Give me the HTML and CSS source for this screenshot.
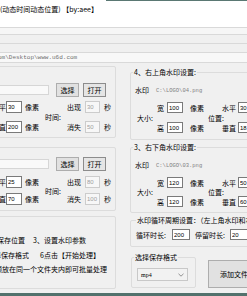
FILE: index.html
```html
<!DOCTYPE html>
<html lang="zh-CN">
<head>
    <meta charset="UTF-8">
    <meta name="viewport" content="width=device-width, initial-scale=1.0">
    <title>水印批量处理</title>
    <link rel="stylesheet" href="styles.css">
</head>
<body>
    <!-- Title -->
    <div class="title">
        <span class="caption">(动态时间动态位置) 【by:aee】</span>
        <span class="edge"></span>
    </div>

    <!-- Top fields -->
    <div class="strip s1"></div>
    <div class="strip s2"></div>
    <div class="strip s3"></div>
    <div class="pathbox">om\Desktop\www.u6d.com</div>

    <div class="main">
        <!-- Left column -->
        <div class="col-left">
            <div class="grp g1">
                <div class="filerow">
                    <div class="tb"></div>
                    <button>选择</button>
                    <button class="on">打开</button>
                </div>
                <div class="params">
                    <span>水平</span><input type="text" value="30"><span class="unit">像素</span>
                    <span class="time">时间:</span>
                    <span class="pre">出现</span><input type="text" class="off" value="30" disabled><span class="sec">秒</span>
                    <span>垂直</span><input type="text" value="200"><span class="unit">像素</span>
                    <span class="pre">消失</span><input type="text" class="off" value="50" disabled><span class="sec">秒</span>
                </div>
            </div>

            <div class="grp g2">
                <div class="filerow">
                    <div class="tb"></div>
                    <button>选择</button>
                    <button class="on">打开</button>
                </div>
                <div class="params">
                    <span>水平</span><input type="text" value="25"><span class="unit">像素</span>
                    <span class="time">时间:</span>
                    <span class="pre">出现</span><input type="text" class="off" value="80" disabled><span class="sec">秒</span>
                    <span>垂直</span><input type="text" value="70"><span class="unit">像素</span>
                    <span class="pre">消失</span><input type="text" class="off" value="100" disabled><span class="sec">秒</span>
                </div>
            </div>

            <div class="panel">
                <div class="line"><span class="cut w1"><span>2、选择保存位置</span></span><span class="step s-a">3、设置水印参数</span></div>
                <div class="line"><span class="cut w2"><span>5、选择保存格式</span></span><span class="step s-b">6点击【开始处理】</span></div>
                <div class="line"><span class="cut w3"><span>将需要处理的视频放在同一个文件夹内即可批量处理</span></span></div>
            </div>
        </div>

        <!-- Right column -->
        <div class="col-right">
            <fieldset class="box b4">
                <legend>4、右上角水印设置:</legend>
                <div class="wm"><span>水印</span><span class="path">C:\LOGO\04.png</span></div>
                <div class="sizes">
                    <span class="big">大小:</span>
                    <span>宽</span><input type="text" value="100"><span class="unit">像素</span>
                    <span class="big pos">位置:</span>
                    <span class="pre">水平</span><input type="text" value="30">
                    <span>高</span><input type="text" value="100"><span class="unit">像素</span>
                    <span class="pre">垂直</span><input type="text" value="18">
                </div>
            </fieldset>

            <fieldset class="box b3">
                <legend>3、右下角水印设置:</legend>
                <div class="wm"><span>水印</span><span class="path">C:\LOGO\03.png</span></div>
                <div class="sizes">
                    <span class="big">大小:</span>
                    <span>宽</span><input type="text" value="120"><span class="unit">像素</span>
                    <span class="big pos">位置:</span>
                    <span class="pre">水平</span><input type="text" value="50">
                    <span>高</span><input type="text" value="120"><span class="unit">像素</span>
                    <span class="pre">垂直</span><input type="text" value="60">
                </div>
            </fieldset>

            <fieldset class="box cyc">
                <legend>水印循环周期设置：（左上角水印和右下角水印）</legend>
                <div class="cycrow">
                    <span class="cl">循环时长:</span><input type="text" value="200">
                    <span class="cl cl2">停留时长:</span><input type="text" value="20">
                </div>
            </fieldset>

            <div class="bottom">
                <fieldset class="box fmt">
                    <legend>选择保存格式</legend>
                    <div class="combo">
                        <span>mp4</span>
                        <svg width="6" height="4" viewBox="0 0 6 4"><path d="M0.5 0.8 L3 3.2 L5.5 0.8" fill="none" stroke="#777" stroke-width="0.8"/></svg>
                    </div>
                </fieldset>
                <button class="add">添加文件</button>
            </div>
        </div>
    </div>

    <div class="statusbar"></div>
</body>
</html>
```

FILE: styles.css
```css
* {
    box-sizing: border-box;
}
body {
    margin: 0;
    width: 247px;
    height: 296px;
    overflow: hidden;
    background-color: #F0F0F0;
    font-family: "Noto Sans CJK SC", "Liberation Sans", sans-serif;
    font-size: 7px;
    line-height: 8px;
    color: #000;
}
input, button {
    font-family: "Liberation Sans", "Noto Sans CJK SC", sans-serif;
    font-size: 6px;
    margin: 0;
}
button {
    font-family: "Noto Sans CJK SC", sans-serif;
    font-size: 7px;
    padding: 0;
    background-color: #E1E1E1;
    border: 1px solid #ADADAD;
    color: #000;
}
input {
    height: 12px;
    padding: 0 1px;
    border: 1px solid #7A7A7A;
    background-color: #FFF;
    color: #000;
}
input.off {
    border-color: #CCCCCC;
    background-color: #F7F7F7;
    color: #A0A0A0;
}

/* title and top fields */
.title {
    display: flex;
    height: 27px;
    background-color: #FFF;
}
.caption {
    padding-top: 5px;
    white-space: nowrap;
}
.edge {
    flex: 1;
    margin-left: 8px;
    border-top: 1px solid #5A7873;
}
.strip {
    border-top: 1px solid #D9D9D9;
}
.s1 {
    height: 7px;
    background-color: #F6F6F6;
}
.s2, .s3 {
    height: 9px;
}
.pathbox {
    height: 11px;
    margin-left: -2px;
    border-top: 1px solid #D9D9D9;
    border-bottom: 1px solid #D9D9D9;
    background-color: #F8F8F8;
    font-family: "Liberation Mono", monospace;
    font-size: 6px;
    line-height: 9px;
    color: #707070;
    white-space: nowrap;
}

.main {
    display: flex;
    align-items: flex-start;
}

/* left column */
.col-left {
    flex: none;
    width: 125px;
    margin-left: -9px;
}
.grp {
    border: 1px solid #DCDCDC;
    border-radius: 2px;
}
.g1 {
    margin-top: 3px;
    height: 72px;
    padding-top: 16px;
}
.g2 {
    margin-top: 9px;
    height: 64px;
    padding-top: 9px;
}
.filerow {
    display: flex;
    height: 14px;
}
.tb {
    width: 57px;
    border: 1px solid #D6D6D6;
    background-color: #F9F9F9;
    margin-top: 2px;
    height: 10px;
}
.filerow button {
    width: 23px;
    height: 14px;
    margin-left: 7px;
}
.filerow button.on {
    margin-left: 4px;
    border-color: #8C8C8C;
    background-color: #E5E5E5;
}
.params {
    display: grid;
    grid-template-columns: 14px 18px 19px 23px 18px 18px 10px;
    grid-auto-rows: 12px;
    row-gap: 8px;
    align-items: center;
    margin-top: 4px;
    white-space: nowrap;
}
.g2 .params {
    margin-top: 5px;
    row-gap: 5px;
}
.params input {
    width: 16px;
}
.params input.off {
    width: 15px;
    margin-left: 1px;
}
.unit {
    padding-left: 1px;
}
.time {
    grid-row: span 2;
    padding-left: 2px;
}
.pre {
    padding-left: 1px;
}
.sec {
    padding-left: 2px;
}
.panel {
    margin-top: 5px;
    height: 73px;
    padding-top: 19px;
    border: 1px solid #DCDCDC;
    border-radius: 2px;
}
.line {
    display: flex;
    height: 14.5px;
    white-space: nowrap;
    margin-left: 8px;
}
.cut {
    display: flex;
    justify-content: flex-end;
    overflow: hidden;
}
.w1 { width: 25px; }
.w2 { width: 29px; }
.w3 { width: 107px; }
.s-a { margin-left: 8px; }
.s-b { margin-left: 11px; }

/* right column */
.col-right {
    flex: none;
    width: 140px;
    margin-left: 14px;
    margin-top: 5px;
}
.box {
    margin: 0;
    padding: 0;
    min-width: 0;
    border: 1px solid #DCDCDC;
    border-radius: 2px;
}
legend {
    margin-left: 2px;
    padding: 0 1px;
    line-height: 8px;
    white-space: nowrap;
}
.b4, .b3 {
    padding-bottom: 6px;
}
.b3 {
    margin-top: 3px;
    padding-bottom: 5px;
}
.wm {
    display: flex;
    height: 9px;
    margin-top: 10px;
    padding-left: 4px;
    line-height: 9px;
}
.path {
    margin-left: 7px;
    font-family: "Liberation Mono", monospace;
    font-size: 5.5px;
    color: #808080;
}
.sizes {
    display: grid;
    grid-template-columns: 26px 10px 16px 24px 14px 17px 30px;
    grid-auto-rows: 11px;
    row-gap: 9px;
    align-items: center;
    margin-top: 7px;
    white-space: nowrap;
}
.b3 .sizes {
    row-gap: 8px;
}
.sizes input {
    width: 16px;
    height: 11px;
}
.big {
    grid-row: span 2;
    padding-left: 6px;
}
.pos {
    padding-left: 1px;
}
.sizes .unit {
    padding-left: 7px;
}
.cyc {
    margin-top: 3px;
    padding-bottom: 6px;
}
.cyc legend {
    margin-left: 5px;
}
.cycrow {
    display: flex;
    align-items: center;
    height: 11px;
    margin-top: 5px;
    padding-left: 5px;
    white-space: nowrap;
}
.cl {
    width: 36px;
}
.cl2 {
    width: 35px;
    margin-left: 5px;
}
.cycrow input {
    width: 18px;
    height: 11px;
}
.bottom {
    display: flex;
    align-items: flex-end;
    margin-top: 6px;
}
.fmt {
    width: 65px;
    margin-left: 1px;
    padding-bottom: 6px;
}
.combo {
    display: flex;
    align-items: center;
    justify-content: space-between;
    width: 51px;
    height: 13px;
    margin: 7px 0 0 5px;
    padding: 0 3px;
    border: 1px solid #C8C8C8;
    background-color: #F2F2F2;
    font-family: "Liberation Serif", serif;
    font-size: 6px;
}
.add {
    width: 50px;
    height: 28px;
    margin-left: 12px;
    padding-left: 11px;
    text-align: left;
}
.statusbar {
    margin-top: 4px;
    height: 3px;
    background-color: #52716C;
}
```
